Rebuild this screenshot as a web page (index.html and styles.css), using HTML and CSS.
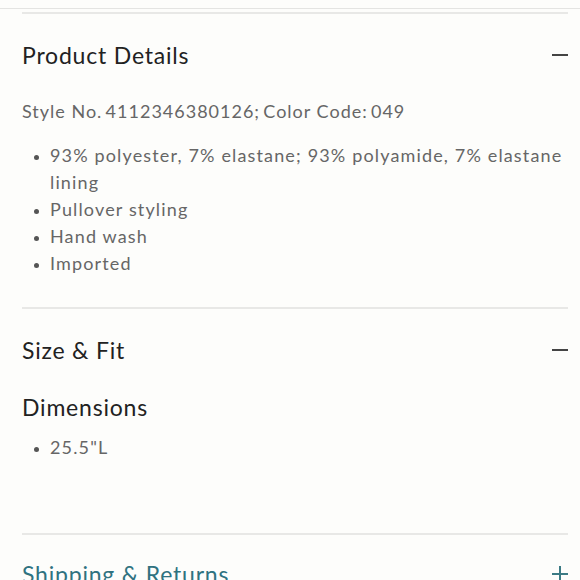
FILE: index.html
```html
<!DOCTYPE html>
<html>
<head>
  <title>Product Details</title>
  <link rel="stylesheet" href="styles.css">
</head>
<body>
  <div class="topbar"></div>
  <div class="accordion">
    <div class="section">
      <div class="section-head">
        <h2>Product Details</h2>
        <span class="icon minus"></span>
      </div>
      <p class="style-no">Style No.&#8201;4112346380126;&#8201;Color Code:&#8201;049</p>
      <ul class="bullets">
        <li>93% polyester, 7% elastane; 93% polyamide, 7% elastane lining</li>
        <li>Pullover styling</li>
        <li>Hand wash</li>
        <li>Imported</li>
      </ul>
    </div>

    <div class="section">
      <div class="section-head">
        <h2>Size &amp; Fit</h2>
        <span class="icon minus"></span>
      </div>
      <h3>Dimensions</h3>
      <ul class="bullets">
        <li>25.5"L</li>
      </ul>
    </div>

    <div class="section closed">
      <div class="section-head">
        <h2>Shipping &amp; Returns</h2>
        <span class="icon plus"></span>
      </div>
    </div>
  </div>
</body>
</html>
```
FILE: styles.css
```css
body {
  margin: 0;
  background-color: #fdfdfb;
  color: #222;
  font-family: Lato, "Noto Sans", sans-serif;
  overflow: hidden;
  height: 580px;
}

.topbar {
  height: 8px;
  border-bottom: 1px solid #e4e4e2;
}

.accordion {
  padding: 0 12px 0 22px;
}

.section {
  border-top: 2px solid #e8e8e6;
  margin-top: 3px;
}

.section + .section {
  margin-top: 0;
}

.section-head {
  display: flex;
  align-items: center;
  justify-content: space-between;
  height: 82px;
}

.closed .section-head {
  height: 78px;
}

.section-head h2 {
  margin: 0;
  font-size: 23px;
  font-weight: 400;
  letter-spacing: 0.8px;
  color: #222;
}

.icon {
  position: relative;
  width: 16px;
  height: 16px;
}

.icon::before,
.icon::after {
  content: "";
  position: absolute;
  background-color: #444;
}

.icon.minus::before {
  left: 0;
  top: 7px;
  width: 16px;
  height: 2px;
}

.icon.plus::before {
  left: 0;
  top: 7px;
  width: 16px;
  height: 2px;
  background-color: #3b7a84;
}

.icon.plus::after {
  left: 7px;
  top: 0;
  width: 2px;
  height: 16px;
  background-color: #3b7a84;
}

.closed .section-head h2 {
  color: #2f7280;
}

.style-no {
  margin: 4px 0 20px;
  font-size: 18px;
  color: #666;
  letter-spacing: 1px;
}

.bullets {
  margin: 0;
  padding: 0 0 0 28px;
  font-size: 18px;
  line-height: 27px;
  color: #666;
  letter-spacing: 1.15px;
}

.bullets li::marker {
  font-size: 14px;
  color: #555;
}

.section:first-child .bullets {
  padding-bottom: 30px;
}

h3 {
  margin: 2px 0 13px;
  font-size: 23px;
  font-weight: 400;
  letter-spacing: 0.8px;
  color: #222;
}

.section:nth-child(2) .bullets {
  padding-bottom: 72px;
}
```
